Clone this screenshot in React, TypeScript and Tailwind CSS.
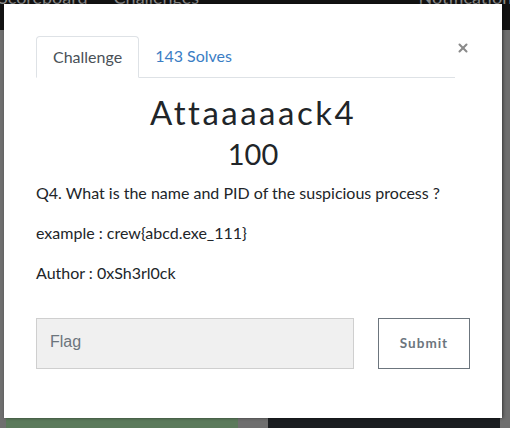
import { X } from 'lucide-react';

const ChallengeModal = () => {
  return (
    <div className="absolute left-[4px] top-[4px] h-[414px] w-[498px] bg-white px-8 pt-8 shadow-[1px_0_3px_rgba(0,0,0,0.5)]">
      <div className="flex items-start">
        <div className="flex flex-1 border-b border-[#dee2e6] text-[16px]">
          <div className="-mb-px rounded-t-[4px] border border-[#dee2e6] border-b-white bg-white px-4 py-2 leading-6 text-[#495057]">
            Challenge
          </div>
          <div className="px-4 py-2 leading-6 text-[#3b7dc4]">143 Solves</div>
        </div>
        <button className="ml-[1px] mt-[5px] w-[14px] text-[#8a8a8a]">
          <X size={14} strokeWidth={3.5} />
        </button>
      </div>

      <div className="mt-[14px] text-center text-[#212529]">
        <h2 className="text-[33px] leading-[40px] tracking-[2.5px]">
          Attaaaaack4
        </h2>
        <h3 className="mt-[4px] text-[29px] leading-[36px]">100</h3>
      </div>

      <div className="mt-[9px] text-[16px] leading-6 text-[#212529]">
        <p className="mb-4">
          Q4. What is the name and PID of the suspicious process ?
        </p>
        <p className="mb-4">example : crew{'{'}abcd.exe_111{'}'}</p>
        <p>Author : 0xSh3rl0ck</p>
      </div>

      <div className="mt-[33px] flex items-start">
        <input
          placeholder="Flag"
          className="h-[51px] w-[318px] border border-[#cfcfcf] bg-[#f0f0f0] px-[13px] pb-1 text-[16px] text-[#495057] outline-none placeholder:text-[#6c757d] [font-family:'Liberation_Sans',Arial,sans-serif]"
        />
        <button className="ml-auto h-[51px] w-[92px] border border-[#6c757d] bg-white text-[13.5px] font-bold tracking-[1px] text-[#6c757d]">
          Submit
        </button>
      </div>
    </div>
  );
};

export default function App() {
  return (
    <div className="relative h-[428px] w-[510px] overflow-hidden bg-[#6f6f6f] [font-family:Lato,'Open_Sans',sans-serif]">
      <div className="flex h-[30px] items-start bg-[#131313] text-[18px] leading-5 text-[#8a8a8a]">
        <span className="-mt-[13px] ml-[-2px]">Scoreboard</span>
        <span className="-mt-[13px] ml-[26px]">Challenges</span>
        <span className="-mt-[13px] ml-auto mr-[10px] inline-block h-[12px] w-[8px] bg-[#8a8a8a]" />
        <span className="-mt-[13px] mr-[-10px]">Notifications</span>
      </div>
      <div className="flex h-[398px] items-end gap-[30px] pb-0 pl-[6px] pr-[10px]">
        <div className="h-[10px] w-[232px] bg-[#5b7a5b]" />
        <div className="h-[10px] w-[232px] bg-[#1b1e21]" />
      </div>
      <ChallengeModal />
    </div>
  );
}
